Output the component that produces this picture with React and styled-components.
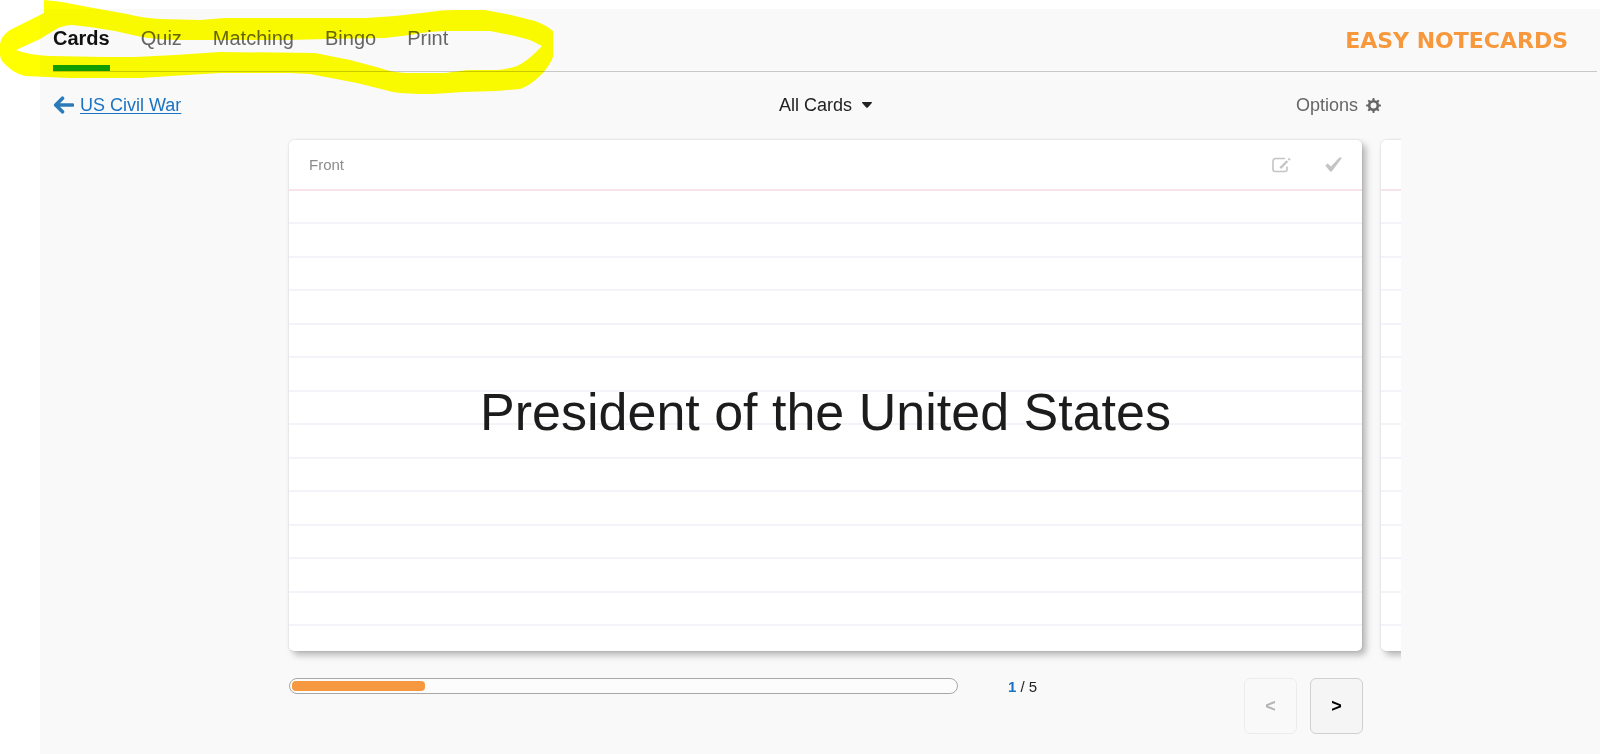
import React, { useState } from "react";
import styled, { createGlobalStyle, css } from "styled-components";

const TABS = ["Cards", "Quiz", "Matching", "Bingo", "Print"];
const TOTAL = 5;
const RULES = Array.from({ length: 13 }, (_, i) => i);

const ArrowIcon = () => (
	<svg width="21" height="18" viewBox="0 0 21 18" aria-hidden="true">
		<path d="M9.500 2.200L2.700 9l6.800 6.800M3.500 9H19.500" fill="none" stroke="#2b7bba" strokeWidth="3.600" strokeLinejoin="round" strokeLinecap="round" />
	</svg>
);

const CaretIcon = () => (
	<svg width="10" height="6" viewBox="0 0 10 6" aria-hidden="true">
		<path d="M0.600 0h8.800c.6 0 .8.6.4 1L5.800 5.400c-.4.500-1.200.500-1.600 0L.2 1C-.2.600 0 0 .6 0z" fill="#222" />
	</svg>
);

const GearIcon = () => (
	<svg width="15" height="15" viewBox="0 0 15 15" aria-hidden="true">
		<circle cx="7.5" cy="7.5" r="4.300" fill="none" stroke="#666" strokeWidth="2.600" />
		{[0, 45, 90, 135, 180, 225, 270, 315].map((a) => (
			<path key={a} d="M6.200 2.500L6.700 0h1.600l.5 2.500z" fill="#666" transform={`rotate(${a} 7.5 7.5)`} />
		))}
	</svg>
);

const EditIcon = () => (
	<svg width="19" height="16" viewBox="0 0 19 16" fill="none" stroke="#c4c4c4" aria-hidden="true">
		<path d="M13 1.500H3.500a2.500 2.500 0 0 0-2.500 2.500v8.500a2 2 0 0 0 2 2h10a2 2 0 0 0 2-2V9.500" strokeWidth="1.600" />
		<path d="M8.300 11.200L15.400 4" strokeWidth="2.400" />
		<path d="M16.600 2.800l1.200-1.200" strokeWidth="2.400" />
	</svg>
);

const CheckIcon = () => (
	<svg width="17" height="15" viewBox="0 0 17 15" aria-hidden="true">
		<path d="M0.300 8.600L2.600 6.500 6 9.600 14.300 0.400h2.200v1.200L6.900 14.200 5.300 14.800z" fill="#c4c4c4" />
	</svg>
);

const Highlight = () => (
	<Marker width="556" height="96" viewBox="0 0 556 96" aria-hidden="true">
		<path
			fill="#ffff00"
			fillRule="evenodd"
			d="M44 0L62 2 88 7 127 14Q142 18 160 19L200 20 225 18 290 18H366L395 16 430 12Q440 10 455 10H485L511 15 535 21Q546 25 553 31V57Q551 63 543 73 530 86 520 89L497 91 463 92 433 94Q405 94 393 92L357 83 310 74 290 73 220 73 170 76 140 78H70L25 76Q12 73 2 61 0 58 0 54V44Q1 36 10 30L44 13Z
			M16 50L40 39 58 28Q66 25 72 25L90 27 115 31 137 36Q155 40 180 40H290L325 39 385 38 410 35Q430 31 448 31H490L515 36 530 40 542 46Q525 64 514 67 507 69 497 70H468L445 73H405Q390 72 380 68L350 60 315 53 220 52 175 55 135 57H105L50 56Q28 55 16 50Z"
		/>
	</Marker>
);

const Paper = ({ children }) => (
	<Sheet>
		<Rules aria-hidden="true">
			{RULES.map((i) => <Rule key={i} />)}
		</Rules>
		{children}
	</Sheet>
);

const App = () => {
	const [tab, setTab] = useState("Cards");
	const [current, setCurrent] = useState(1);

	return (
		<>
			<GlobalStyle />
			<Page>
				<Header>
					<Nav aria-label="Study modes">
						{TABS.map((name) => (
							<Tab
								key={name}
								href={`#${name.toLowerCase()}`}
								$active={name === tab}
								onClick={() => setTab(name)}
							>
								{name}
							</Tab>
						))}
					</Nav>
					<Logo href="#home">EASY NOTECARDS</Logo>
				</Header>

				<Toolbar>
					<BackLink href="#set">
						<ArrowIcon />
						<span>US Civil War</span>
					</BackLink>
					<FilterButton type="button">
						All Cards
						<CaretIcon />
					</FilterButton>
					<OptionsButton type="button">
						Options
						<GearIcon />
					</OptionsButton>
				</Toolbar>

				<Deck>
					<Card>
						<CardHead>
							<span>Front</span>
							<Actions>
								<IconButton type="button" aria-label="Edit"><EditIcon /></IconButton>
								<IconButton type="button" aria-label="Mark as known"><CheckIcon /></IconButton>
							</Actions>
						</CardHead>
						<Paper>
							<Prompt>President of the United States</Prompt>
						</Paper>
					</Card>
					<Card aria-hidden="true">
						<CardHead />
						<Paper />
					</Card>
				</Deck>

				<Footer>
					<Track role="progressbar" aria-label="Progress" aria-valuemin={0} aria-valuemax={TOTAL} aria-valuenow={current}>
						<Fill style={{ width: `${(current / TOTAL) * 100}%` }} />
					</Track>
					<Counter>
						<strong>{current}</strong> / {TOTAL}
					</Counter>
					<Pager>
						<PageButton
							type="button"
							aria-label="Previous card"
							disabled={current === 1}
							onClick={() => setCurrent(current - 1)}
						>
							&lt;
						</PageButton>
						<PageButton
							type="button"
							aria-label="Next card"
							disabled={current === TOTAL}
							onClick={() => setCurrent(current + 1)}
						>
							&gt;
						</PageButton>
					</Pager>
				</Footer>
			</Page>
			<Highlight />
		</>
	);
};

export default App;


// Styles

const GlobalStyle = createGlobalStyle`
	* {
		box-sizing: border-box;
	}
	body {
		margin: 0;
		background: #fff;
		color: #222;
		font-family: "Liberation Sans", Arial, sans-serif;
		font-size: 18px;
	}
	button {
		font: inherit;
		color: inherit;
		padding: 0;
		border: none;
		background: none;
		cursor: pointer;
	}
	svg {
		display: block;
		flex-shrink: 0;
	}
`;

const Page = styled.div`
	margin: 9px 0 0 40px;
	min-height: calc(100vh - 9px);
	background: #f9f9f9;
`;

const Header = styled.header`
	display: flex;
	justify-content: space-between;
	align-items: center;
	height: 63px;
	margin: 0 3px 0 13px;
	padding-right: 29px;
	border-bottom: 1px solid #c8c8c8;
`;

const Nav = styled.nav`
	display: flex;
	align-self: stretch;
	gap: 31px;
`;

const Tab = styled.a`
	padding-top: 17px;
	font-size: 20px;
	line-height: 24px;
	color: #666;
	text-decoration: none;
	border-bottom: 6px solid transparent;

	${({ $active }) => $active && css`
		color: #111;
		font-weight: bold;
		border-color: #119d11;
	`}
`;

const Logo = styled.a`
	font-family: "DejaVu Sans", sans-serif;
	font-size: 22px;
	font-weight: bold;
	color: #f7983c;
	text-decoration: none;
`;

const Toolbar = styled.div`
	display: grid;
	grid-template-columns: 236px 1fr 19px;
	align-items: center;
	height: 66px;
	padding: 0 219px 0 13px;
`;

const BackLink = styled.a`
	grid-area: 1 / 1;
	display: flex;
	align-items: center;
	gap: 6px;
	color: #1b73c4;
	text-decoration: none;

	span {
		text-decoration: underline;
		text-underline-offset: 2px;
	}
`;

const FilterButton = styled.button`
	grid-area: 1 / 2;
	display: flex;
	align-items: center;
	justify-self: center;
	gap: 10px;
`;

const OptionsButton = styled.button`
	grid-area: 1 / 2 / 2 / 4;
	display: flex;
	align-items: center;
	justify-self: end;
	gap: 8px;

	&& {
		color: #666;
	}
`;

const Deck = styled.main`
	display: flex;
	gap: 19px;
	margin: 0 199px 0 237px;
	padding: 2px 0 15px 12px;
	overflow: hidden;
`;

const Card = styled.section`
	flex: 0 0 calc(100% - 39px);
	overflow: hidden;
	border-radius: 5px;
	background: #fff;
	box-shadow: 0 0 2px rgba(0, 0, 0, 0.15), 4px 4px 7px rgba(0, 0, 0, 0.28);
`;

const CardHead = styled.div`
	display: flex;
	justify-content: space-between;
	align-items: center;
	height: 51px;
	padding: 0 20px;
	border-bottom: 2px solid #f8e3ea;
	font-size: 15px;
	color: #8c8c8c;
`;

const Actions = styled.div`
	display: flex;
	align-items: center;
	gap: 34px;
`;

const IconButton = styled.button`
	display: block;
`;

const Sheet = styled.div`
	display: grid;
	grid-template-rows: 435px 25px;
`;

const Rules = styled.div`
	grid-area: 1 / 1;
	display: grid;
	grid-template-rows: repeat(13, 1fr);
`;

const Rule = styled.div`
	border-bottom: 2px solid #f2f4fa;
`;

const Prompt = styled.h1`
	grid-area: 1 / 1;
	place-self: center;
	margin: 0;
	padding-top: 6px;
	font-size: 52px;
	font-weight: normal;
	line-height: 60px;
	color: #1c1c1c;
`;

const Footer = styled.footer`
	display: flex;
	align-items: flex-start;
	margin: 0 237px 0 249px;
	padding: 12px 0 20px;
`;

const Track = styled.div`
	flex: 1;
	height: 16px;
	padding: 2px;
	border: 1px solid #a8a8a8;
	border-radius: 8px;
	background: #fcfcfc;
`;

const Fill = styled.div`
	height: 10px;
	border-radius: 4px;
	background: #f6983f;
`;

const Counter = styled.div`
	width: 286px;
	padding-left: 50px;
	font-size: 15px;
	line-height: 17px;

	strong {
		color: #1b73c4;
	}
`;

const Pager = styled.div`
	display: flex;
	gap: 13px;
`;

const PageButton = styled.button`
	&& {
		width: 53px;
		height: 56px;
		border: 1px solid #d0d0d0;
		border-radius: 6px;
		background: #f5f5f5;
		color: #000;
		font-weight: bold;
	}

	&&:disabled {
		border-color: #ececec;
		background: #f9f9f9;
		color: #b4b4b4;
		cursor: default;
	}
`;

// hand drawn marker loop around the tabs
const Marker = styled.svg`
	position: absolute;
	top: 0;
	left: 0;
	mix-blend-mode: multiply;
	pointer-events: none;
`;
